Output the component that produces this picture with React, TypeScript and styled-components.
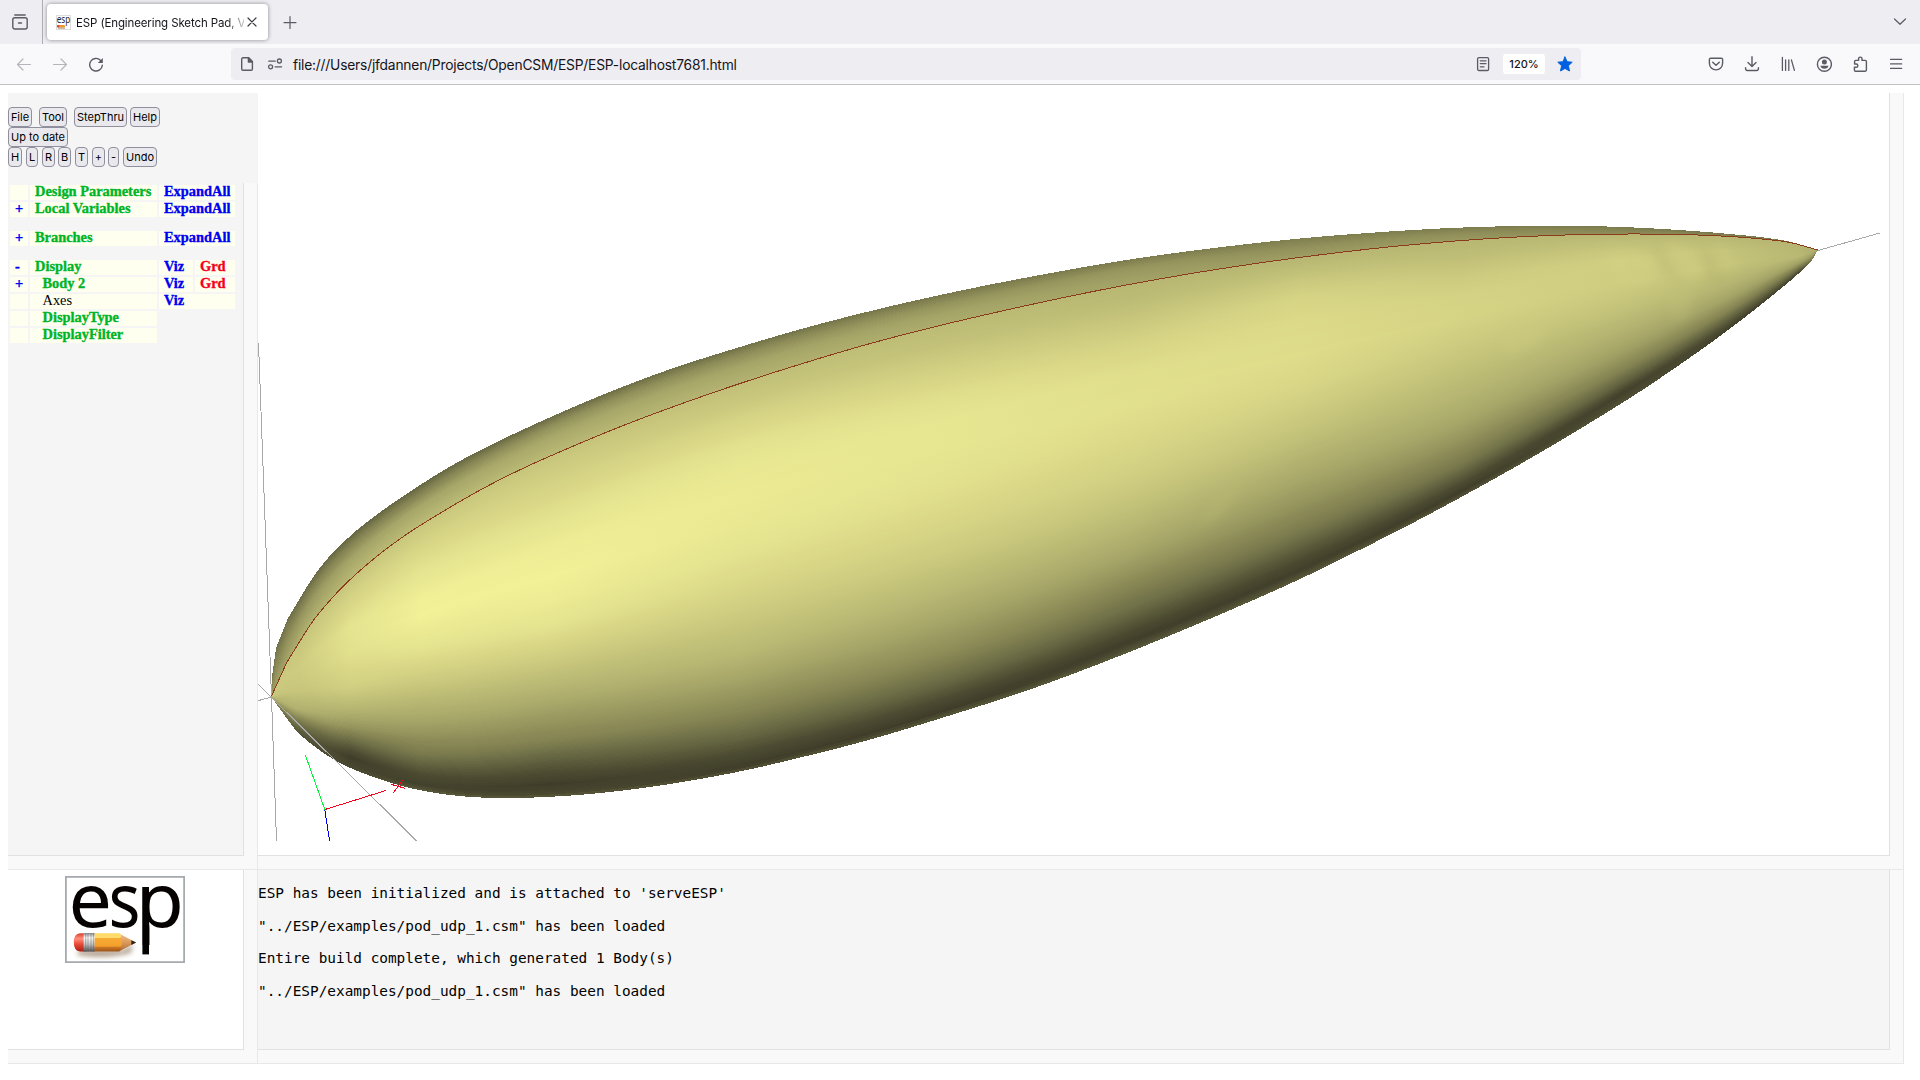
import React from "react";
import styled, { createGlobalStyle } from "styled-components";

const UI = `Inter, "Liberation Sans", sans-serif`;

const GlobalStyle = createGlobalStyle`
  * { box-sizing: border-box; }
  html, body { margin: 0; padding: 0; background: #fff; overflow: hidden; }
`;

const Window = styled.div`
  width: 1920px;
  height: 1080px;
  display: flex;
  flex-direction: column;
  overflow: hidden;
  background: #fff;
  font-family: ${UI};
`;

/* ---------- browser chrome ---------- */

const TabStrip = styled.header`
  height: 44px;
  display: flex;
  align-items: center;
  background: #eeedf2;
  color: #5b5b66;
`;

const ViewButton = styled.div`
  width: 43px;
  height: 44px;
  padding: 14px 0 0 12px;
  border-right: 1px solid #adadb3;
`;

const Tab = styled.div`
  width: 221px;
  height: 36px;
  margin-left: 4px;
  padding: 0 8px 0 9px;
  display: flex;
  align-items: center;
  background: #fff;
  border-radius: 4px;
  box-shadow: 0 0 4px rgba(0, 0, 0, 0.42);
  color: #15141a;
`;

const TabTitle = styled.span`
  width: 168px;
  margin-left: 5px;
  margin-right: auto;
  font-size: 11.5px;
  letter-spacing: -0.12px;
  line-height: 20px;
  padding-top: 1px;
  white-space: nowrap;
  overflow: hidden;
  mask-image: linear-gradient(to right, #000 150px, transparent 174px);
`;

const NewTab = styled.div`
  margin-left: 14px;
  height: 16px;
`;

const ListTabs = styled.div`
  margin-left: auto;
  margin-right: 12px;
  height: 16px;
`;

const NavBar = styled.nav`
  height: 41px;
  display: flex;
  align-items: center;
  padding: 0 16px;
  background: #f9f9fb;
  border-bottom: 1px solid #c1c1c6;
  color: #5b5b66;
`;

const IconRow = styled.div<{ $push?: boolean }>`
  display: flex;
  align-items: center;
  gap: 20px;
  margin-left: ${(p) => (p.$push ? "auto" : "0")};
  height: 16px;
`;

const UrlBar = styled.div`
  width: 1350px;
  height: 32px;
  margin-left: 127px;
  padding: 0 8px 0 8px;
  display: flex;
  align-items: center;
  background: #eeedf2;
  border-radius: 4px;
`;

const UrlText = styled.span`
  margin-left: 10px;
  flex: 1;
  font-size: 13.8px;
  line-height: 20px;
  padding-top: 2px;
  letter-spacing: -0.2px;
  color: #15141a;
  white-space: nowrap;
`;

const IconGap = styled.div<{ $w: number }>`
  width: ${(p) => p.$w}px;
`;

const ZoomPill = styled.div`
  width: 42px;
  height: 20px;
  margin: 0 12px 0 12px;
  border-radius: 3px;
  background: #fff;
  color: #15141a;
  font-size: 11px;
  font-weight: 500;
  line-height: 20px;
  text-align: center;
`;

/* ---------- page ---------- */

const Page = styled.main`
  flex: 1;
  padding: 8px 16px 0 8px;
  display: grid;
  grid-template-columns: 250px 1646px;
  grid-template-rows: 777px 194px;
`;

const LeftColumn = styled.div`
  display: flex;
  flex-direction: column;
`;

const Frame = styled.section`
  flex: 1;
  display: flex;
  padding: 0 13px 13px 0;
  background: #f9f9f9;
  border: solid #e8e8e8;
  border-width: 0 1px 1px 0;
`;

const Inner = styled.div<{ $bg: string }>`
  flex: 1;
  min-width: 0;
  background: ${(p) => p.$bg};
  border: solid #e1e1e1;
  border-width: 0 1px 1px 0;
`;

const Toolbar = styled.div`
  height: 90px;
  padding-top: 14px;
  background: #f5f5f5;
`;

const ButtonRow = styled.div`
  display: flex;
  height: 20px;
`;

const Button = styled.button<{ $w: number; $ml?: number }>`
  width: ${(p) => p.$w}px;
  height: 20px;
  margin: 0 0 0 ${(p) => p.$ml ?? 0}px;
  padding: 0;
  border: 1px solid #8f8f9d;
  border-radius: 4px;
  background: #e9e9ed;
  color: #000;
  font-family: ${UI};
  font-size: 11px;
  line-height: 18px;
  text-align: center;
  white-space: nowrap;
`;

const Tree = styled.div`
  padding: 2px 0 0 2px;
  display: flex;
  flex-direction: column;
  gap: 2px;
`;

const TreeRow = styled.div<{ $gapBefore?: boolean }>`
  display: grid;
  grid-template-columns: 18px 127px 34px 40px;
  column-gap: 2px;
  height: 15px;
  margin-top: ${(p) => (p.$gapBefore ? 12 : 0)}px;
`;

const Cell = styled.div<{ $c?: string; $span?: number; $indent?: boolean; $plain?: boolean }>`
  grid-column: span ${(p) => p.$span ?? 1};
  padding-left: ${(p) => (p.$indent ? 12.5 : 5)}px;
  background: #fffff0;
  color: ${(p) => p.$c ?? "#000"};
  font-family: "Liberation Serif", serif;
  font-size: 14.4px;
  font-weight: ${(p) => (p.$plain ? 400 : 700)};
  -webkit-text-stroke: ${(p) => (p.$plain ? 0 : 0.35)}px currentColor;
  line-height: 12px;
  white-space: nowrap;
`;

const LogoPane = styled.div`
  padding: 6px 0 0 57px;
`;

const Console = styled.div`
  padding-top: 15px;
  font-family: "DejaVu Sans Mono", "Liberation Mono", monospace;
  font-size: 14.4px;
  color: #000;
`;

const Message = styled.pre`
  margin: 0 0 15.67px;
  height: 17px;
  line-height: 17px;
  font: inherit;
`;

/* ---------- icons ---------- */

type IconProps = { children: React.ReactNode; color?: string; w?: number };
const Icon = ({ children, color = "currentColor", w = 1.3 }: IconProps) => (
  <svg width="16" height="16" viewBox="0 0 16 16" fill="none" stroke={color} strokeWidth={w}
    strokeLinecap="round" strokeLinejoin="round" style={{ display: "block", flex: "none" }}>
    {children}
  </svg>
);

const Favicon = () => (
  <svg width="15" height="15" viewBox="0 0 15 15" style={{ display: "block", flex: "none" }}>
    <rect x=".5" y=".5" width="14" height="14" fill="#fff" stroke="#dcdcdc" />
    <text x=".8" y="8.4" fontFamily="Noto Sans" fontSize="10.5" textLength="13.4" lengthAdjust="spacingAndGlyphs" fill="#222">esp</text>
    <rect x="1" y="10" width="8" height="2.6" rx="1" fill="#f0962c" />
    <rect x="1" y="10" width="2.4" height="2.6" rx="1" fill="#d9483a" />
    <rect x="2" y="12.6" width="7" height="1" fill="#a98c6e" />
  </svg>
);

/* ---------- ESP logo ---------- */

const Logo = () => (
  <svg width="120" height="87" viewBox="0 0 120 87" style={{ display: "block" }}>
    <defs>
      <linearGradient id="wood" x1="0" y1="0" x2="0" y2="1">
        <stop offset="0" stopColor="#ffd964" /><stop offset=".26" stopColor="#ffdd70" />
        <stop offset=".28" stopColor="#f7ab34" /><stop offset=".72" stopColor="#f3a02b" />
        <stop offset=".75" stopColor="#cf7a22" /><stop offset="1" stopColor="#9c541b" />
      </linearGradient>
      <linearGradient id="rubber" x1="0" y1="0" x2="0" y2="1">
        <stop offset="0" stopColor="#d8402c" /><stop offset=".3" stopColor="#ff8f7c" />
        <stop offset=".6" stopColor="#e64a36" /><stop offset="1" stopColor="#a81e14" />
      </linearGradient>
      <linearGradient id="ferrule" x1="0" y1="0" x2="0" y2="1">
        <stop offset="0" stopColor="#8f8f8f" /><stop offset=".25" stopColor="#fbfbfb" />
        <stop offset=".6" stopColor="#c4c4c4" /><stop offset="1" stopColor="#545454" />
      </linearGradient>
      <linearGradient id="tip" x1="0" y1="0" x2="0" y2="1">
        <stop offset="0" stopColor="#f2c08a" /><stop offset=".5" stopColor="#dc9a5c" /><stop offset="1" stopColor="#a86a34" />
      </linearGradient>
      <filter id="soft" x="-20%" y="-80%" width="140%" height="260%"><feGaussianBlur stdDeviation="2.6" /></filter>
    </defs>
    <rect x=".9" y=".9" width="118.2" height="85.2" fill="#fff" stroke="#a2a7ab" strokeWidth="1.7" />
    <g fontFamily="Noto Sans, Open Sans, sans-serif" fontSize="75" fill="#060202">
      <text x="3.4" y="50.6" textLength="43.5" lengthAdjust="spacingAndGlyphs">e</text>
      <text x="43.6" y="50.6" textLength="32" lengthAdjust="spacingAndGlyphs">s</text>
      <text x="71" y="50.6" textLength="48" lengthAdjust="spacingAndGlyphs">p</text>
    </g>
    <rect x="77.4" y="11" width="6.6" height="67.4" fill="#060202" />
    <path d="M14 74 H58 L68 68 L66 77 Q40 84 12 79Z" fill="#6b4a28" opacity=".5" filter="url(#soft)" />
    <path d="M54 57.4 L71 66.6 L54 75.4Z" fill="url(#tip)" />
    <path d="M66.3 64.2 L71.2 66.6 L66.3 69Z" fill="#2a2520" />
    <path d="M29 57.2 H54.5 Q57.5 60 55 62 Q59 66 55.5 71 Q57 74 54 75.4 H29Z" fill="url(#wood)" />
    <path d="M20 57.2 H15 Q8.8 58 8.8 66 Q8.8 75 15 75.6 H20Z" fill="url(#rubber)" />
    <rect x="18.6" y="57" width="11" height="18.6" fill="url(#ferrule)" />
    <path d="M20.7 57V75.6M23 57V75.6M26 57V75.6M28.4 57V75.6" stroke="#555" strokeWidth=".6" opacity=".7" />
  </svg>
);

/* ---------- 3-D view ---------- */

type Pt = [number, number];

const TOP: Pt[] = [[271.5, 696], [272, 677], [276, 648], [288, 618], [311, 580], [325, 561.5], [348, 538], [380, 512.3], [417, 487], [453, 464.8], [500, 440.5], [533, 425], [590, 400], [665, 371], [740, 347], [803, 328.5], [883, 308], [954, 292], [1040, 275], [1133, 259], [1222, 247], [1300, 238.5], [1372, 232.7], [1466, 227.4], [1500, 226.4], [1550, 225.8], [1600, 226.3], [1640, 227.8], [1700, 231.5], [1735, 234.5], [1770, 238.3], [1790, 241.7], [1817.5, 250]];
const SEAM: Pt[] = [[271.5, 696], [287, 662], [310, 625], [333, 597], [370, 562], [403, 536.8], [443, 511.5], [483, 488.5], [527, 466.5], [567, 448.8], [617, 428], [692, 400], [740, 383.5], [793.6, 366.3], [865, 345], [940, 325.5], [1018.6, 307.3], [1097, 290.7], [1186, 274.4], [1300, 257.4], [1344, 251.9], [1412, 244.7], [1491, 238.5], [1576, 234.7], [1637, 234], [1698, 235], [1758.6, 238.7], [1791, 242.7], [1817.5, 250]];
const BOTTOM: Pt[] = [[271.5, 697], [276, 703.5], [293, 727], [318, 749], [340, 763], [364, 773.5], [390, 782.5], [410, 788], [430, 792], [467, 796.7], [506, 798], [550, 796.8], [600, 793], [650, 787], [700, 779], [750, 769.3], [790, 760], [865, 741], [940, 718.5], [1037, 687], [1115, 657.7], [1170, 635.5], [1235, 608], [1300, 579], [1346, 556.7], [1426, 516], [1480, 486.7], [1530, 458.5], [1583.6, 426.7], [1640, 391.5], [1680, 364.5], [1707, 345.5], [1740, 321], [1773, 295], [1794, 277.5], [1807, 265.5], [1812, 260], [1817.5, 250.5]];

// The mesh is coarse at the nose, so its outline is straight-edged up to this x.
const NOSE_END = 311;

// Cubic Hermite interpolation with distance-weighted tangents.
const curve = (pts: Pt[]) => {
  const n = pts.length;
  const gaps = pts.slice(1).map((p, i) => p[0] - pts[i][0]);
  const d = gaps.map((h, i) => (pts[i + 1][1] - pts[i][1]) / h);
  const m = pts.map((_, i) => {
    if (i === 0) return d[0];
    if (i === n - 1) return d[n - 2];
    return (d[i - 1] * gaps[i] + d[i] * gaps[i - 1]) / (gaps[i - 1] + gaps[i]);
  });
  return (x: number) => {
    if (x <= pts[0][0]) return pts[0][1];
    if (x >= pts[n - 1][0]) return pts[n - 1][1];
    let i = 0;
    while (x > pts[i + 1][0]) i++;
    const h = gaps[i];
    const t = (x - pts[i][0]) / h;
    if (pts[i + 1][0] <= NOSE_END) return pts[i][1] + t * (pts[i + 1][1] - pts[i][1]);
    const a = t * t, b = a * t;
    return (2 * b - 3 * a + 1) * pts[i][1] + (b - 2 * a + t) * h * m[i] + (3 * a - 2 * b) * pts[i + 1][1] + (b - a) * h * m[i + 1];
  };
};

const lerpTable = (pts: Pt[], x: number) => {
  if (x <= pts[0][0]) return pts[0][1];
  for (let i = 1; i < pts.length; i++) {
    if (x <= pts[i][0]) {
      const t = (x - pts[i - 1][0]) / (pts[i][0] - pts[i - 1][0]);
      return pts[i - 1][1] + t * (pts[i][1] - pts[i - 1][1]);
    }
  }
  return pts[pts.length - 1][1];
};

const RAMP: [number, number[]][] = [
  [0, [60, 58, 39]], [0.1, [75, 74, 49]], [0.25, [106, 107, 69]], [0.4, [138, 137, 86]], [0.53, [165, 165, 104]],
  [0.65, [186, 185, 116]], [0.78, [210, 208, 130]], [0.88, [227, 226, 142]], [1, [243, 242, 152]],
];
const shadeColor = (s: number) =>
  `rgb(${[0, 1, 2].map((c) => lerpTable(RAMP.map(([k, v]) => [k, v[c]] as Pt), s).toFixed(1)).join(",")})`;

// Light intensity across the hull: `up` runs silhouette -> seam, `low` runs seam -> lower silhouette.
const STATIONS: { x: number; up: Pt[]; low: Pt[] }[] = [
  { x: 272, up: [[0, 0.3], [1, 0.5]], low: [[0, 0.75], [0.5, 0.72], [0.8, 0.6], [1, 0.35]] },
  { x: 300, up: [[0, 0.27], [0.4, 0.45], [1, 0.6]], low: [[0, 0.72], [0.28, 0.76], [0.53, 0.72], [0.73, 0.6], [0.86, 0.32], [1, 0.12]] },
  { x: 350, up: [[0, 0.25], [0.2, 0.38], [0.5, 0.52], [1, 0.65]], low: [[0, 0.72], [0.1, 0.8], [0.25, 0.89], [0.39, 0.87], [0.57, 0.77], [0.67, 0.65], [0.78, 0.45], [0.88, 0.17], [0.94, 0.02], [1, 0.1]] },
  { x: 420, up: [[0, 0.25], [0.2, 0.38], [0.5, 0.54], [1, 0.67]], low: [[0, 0.73], [0.09, 0.82], [0.18, 0.9], [0.28, 0.985], [0.34, 0.99], [0.43, 0.92], [0.53, 0.81], [0.62, 0.7], [0.71, 0.57], [0.78, 0.46], [0.86, 0.32], [0.93, 0.12], [0.975, 0.04], [1, 0.2]] },
  { x: 550, up: [[0, 0.28], [0.2, 0.43], [0.5, 0.55], [1, 0.66]], low: [[0, 0.72], [0.08, 0.79], [0.18, 0.88], [0.26, 0.96], [0.35, 0.99], [0.42, 0.96], [0.5, 0.88], [0.58, 0.77], [0.67, 0.64], [0.76, 0.48], [0.83, 0.37], [0.9, 0.17], [0.96, 0.02], [0.985, 0.08], [1, 0.2]] },
  { x: 740, up: [[0, 0.3], [0.2, 0.42], [0.5, 0.53], [1, 0.62]], low: [[0, 0.69], [0.05, 0.74], [0.09, 0.8], [0.15, 0.87], [0.22, 0.93], [0.29, 0.95], [0.36, 0.93], [0.44, 0.88], [0.53, 0.81], [0.61, 0.73], [0.69, 0.65], [0.77, 0.51], [0.845, 0.38], [0.9, 0.25], [0.955, 0.09], [0.985, 0.02], [1, 0.2]] },
  { x: 954, up: [[0, 0.33], [0.3, 0.45], [0.6, 0.52], [1, 0.57]], low: [[0, 0.66], [0.05, 0.7], [0.105, 0.77], [0.17, 0.85], [0.24, 0.9], [0.315, 0.9], [0.41, 0.87], [0.49, 0.82], [0.58, 0.75], [0.67, 0.65], [0.76, 0.52], [0.835, 0.41], [0.9, 0.26], [0.945, 0.12], [0.98, 0.02], [1, 0.2]] },
  { x: 1133, up: [[0, 0.34], [0.3, 0.45], [0.6, 0.49], [1, 0.53]], low: [[0, 0.64], [0.045, 0.67], [0.09, 0.72], [0.17, 0.81], [0.24, 0.86], [0.33, 0.87], [0.42, 0.83], [0.52, 0.77], [0.6, 0.7], [0.66, 0.63], [0.735, 0.53], [0.81, 0.4], [0.88, 0.27], [0.93, 0.13], [0.97, 0.02], [1, 0.2]] },
  { x: 1300, up: [[0, 0.35], [0.4, 0.43], [1, 0.5]], low: [[0, 0.63], [0.06, 0.72], [0.12, 0.8], [0.2, 0.84], [0.3, 0.85], [0.39, 0.82], [0.47, 0.76], [0.56, 0.69], [0.62, 0.62], [0.68, 0.55], [0.77, 0.44], [0.85, 0.32], [0.91, 0.17], [0.97, 0.03], [1, 0.2]] },
  { x: 1460, up: [[0, 0.34], [0.4, 0.42], [1, 0.48]], low: [[0, 0.64], [0.05, 0.67], [0.13, 0.74], [0.21, 0.79], [0.3, 0.8], [0.4, 0.75], [0.49, 0.7], [0.61, 0.62], [0.7, 0.54], [0.79, 0.43], [0.87, 0.31], [0.935, 0.13], [0.975, 0.02], [1, 0.18]] },
  { x: 1620, up: [[0, 0.33], [1, 0.43]], low: [[0, 0.64], [0.07, 0.71], [0.15, 0.77], [0.29, 0.76], [0.44, 0.7], [0.56, 0.62], [0.7, 0.5], [0.8, 0.37], [0.88, 0.2], [0.94, 0.04], [1, 0.15]] },
  { x: 1730, up: [[0, 0.3], [1, 0.4]], low: [[0, 0.64], [0.15, 0.7], [0.3, 0.71], [0.5, 0.63], [0.65, 0.53], [0.79, 0.38], [0.9, 0.18], [1, 0.02]] },
  { x: 1800, up: [[0, 0.3], [1, 0.42]], low: [[0, 0.62], [0.4, 0.65], [0.65, 0.5], [0.85, 0.25], [1, 0.05]] },
  { x: 1818, up: [[0, 0.3], [1, 0.42]], low: [[0, 0.62], [1, 0.4]] },
];

const topAt = curve(TOP);
const seamAt = curve(SEAM);
const bottomAt = curve(BOTTOM);

const XS: number[] = [];
for (let x = 271.5; x < 1817.5; x += x < 290 ? 0.5 : x > 1780 ? 2 : 6) XS.push(x);
XS.push(1817.5);

const level = (v: number) => (x: number) =>
  v < 1 ? topAt(x) + v * (seamAt(x) - topAt(x)) : seamAt(x) + (v - 1) * (bottomAt(x) - seamAt(x));

const fmt = (x: number, y: number) => `${x.toFixed(1)},${y.toFixed(2)}`;
const bottomPath = [...XS].reverse().map((x) => fmt(x, bottomAt(x))).join(" ");

const LEVELS: number[] = [];
for (let i = 0; i < 16; i++) LEVELS.push(i / 16);
for (let i = 0; i < 150; i++) LEVELS.push(1 + i / 150);

const SEAM_PATH = XS.map((x) => fmt(x, seamAt(x))).join(" ");

const Hull = () => (
  <g shapeRendering="crispEdges">
    <defs>
      {LEVELS.map((v, i) => (
        <linearGradient key={i} id={`hull${i}`} gradientUnits="userSpaceOnUse" x1="272" y1="0" x2="1818" y2="0">
          {STATIONS.map((s) => (
            <stop key={s.x} offset={(s.x - 272) / 1546}
              stopColor={shadeColor(v < 1 ? lerpTable(s.up, v) : lerpTable(s.low, v - 1))} />
          ))}
        </linearGradient>
      ))}
    </defs>
    {LEVELS.map((v, i) => {
      const f = level(v);
      return <polygon key={i} fill={`url(#hull${i})`} points={`${XS.map((x) => fmt(x, f(x))).join(" ")} ${bottomPath}`} />;
    })}
    <polyline points={SEAM_PATH} fill="none" stroke="#8c3a1c" strokeWidth="1" />
  </g>
);

// Slight facet shading where the surface mesh gets coarse near the tail.
const FACETS: { d: string; fill: string; o: number }[] = [
  { d: "M1606 254L1632 250L1662 262L1650 284L1622 288Z", fill: "#d8d687", o: 0.2 },
  { d: "M1664 240L1690 246L1706 272L1692 282L1676 262Z", fill: "#d8d687", o: 0.2 },
  { d: "M1712 242L1728 246L1740 268L1728 274Z", fill: "#d8d687", o: 0.16 },
  { d: "M1648 246L1664 250L1682 284L1664 276Z", fill: "#a3a263", o: 0.15 },
  { d: "M1700 246L1712 256L1724 284L1708 280Z", fill: "#a3a263", o: 0.15 },
  { d: "M1666 296L1696 290L1688 318L1672 322Z", fill: "#cccb80", o: 0.18 },
  { d: "M1500 338L1548 326L1536 348L1508 356Z", fill: "#d4d386", o: 0.18 },
  { d: "M1212 500L1246 478L1222 516L1196 530Z", fill: "#c8c77c", o: 0.16 },
];

const Viewport = () => (
  <svg width="1631" height="762" viewBox="258 93 1631 762" style={{ display: "block" }}>
    <defs>
      <filter id="facet" x="-40%" y="-40%" width="180%" height="180%"><feGaussianBlur stdDeviation="4" /></filter>
    </defs>
    <line x1="258.5" y1="343" x2="271.5" y2="697" stroke="#a8a8a8" shapeRendering="crispEdges" />
    <Hull />
    {FACETS.map((f) => <path key={f.d} d={f.d} fill={f.fill} opacity={f.o} filter="url(#facet)" />)}
    <g stroke="#a8a8a8" strokeWidth="1" shapeRendering="crispEdges">
      <line x1="271.5" y1="697" x2="276.5" y2="841" />
      <line x1="258" y1="684" x2="416.7" y2="841" />
      <line x1="258" y1="700.7" x2="271.5" y2="697" />
      <line x1="1818" y1="250.5" x2="1880" y2="233" />
    </g>
    <g strokeWidth="1" shapeRendering="crispEdges">
      <line x1="305.3" y1="755" x2="324.8" y2="809.5" stroke="#00f53c" />
      <line x1="325" y1="809.5" x2="386" y2="790.5" stroke="#f5001e" />
      <line x1="324.8" y1="810" x2="329.6" y2="841" stroke="#0000f0" />
      <line x1="391" y1="784.3" x2="405" y2="788.3" stroke="#f5001e" />
      <line x1="402.8" y1="780" x2="393.3" y2="793" stroke="#f5001e" />
    </g>
  </svg>
);

/* ---------- data ---------- */

const GREEN = "#00b428";
const BLUE = "#0000f0";
const RED = "#f5001e";

type Row = { mark?: string; name: string; indent?: boolean; plain?: boolean; viz?: string; grd?: boolean; gap?: boolean };
const ROWS: Row[] = [
  { name: "Design Parameters", viz: "ExpandAll" },
  { mark: "+", name: "Local Variables", viz: "ExpandAll" },
  { mark: "+", name: "Branches", viz: "ExpandAll", gap: true },
  { mark: "-", name: "Display", viz: "Viz", grd: true, gap: true },
  { mark: "+", name: "Body 2", indent: true, viz: "Viz", grd: true },
  { name: "Axes", indent: true, plain: true, viz: "Viz" },
  { name: "DisplayType", indent: true },
  { name: "DisplayFilter", indent: true },
];

const MESSAGES = [
  "ESP has been initialized and is attached to 'serveESP'",
  '"../ESP/examples/pod_udp_1.csm" has been loaded',
  "Entire build complete, which generated 1 Body(s)",
  '"../ESP/examples/pod_udp_1.csm" has been loaded',
];

export default function App() {
  return (
    <Window>
      <GlobalStyle />
      <TabStrip>
        <ViewButton>
          <Icon w={1.4}>
            <path d="M2.8 1H13.2" /><rect x=".8" y="3.8" width="14.4" height="11.2" rx="2" /><path d="M6.5 9H9.5" />
          </Icon>
        </ViewButton>
        <Tab>
          <Favicon />
          <TabTitle>ESP (Engineering Sketch Pad, V1</TabTitle>
          <Icon color="#3c3b44" w={1.2}><path d="M4 4L12 12M12 4L4 12" /></Icon>
        </Tab>
        <NewTab><Icon w={1.2}><path d="M8 2.7V14.5M2 8.6H14" /></Icon></NewTab>
        <ListTabs><Icon w={1.2}><path d="M2.5 5L8 10.3L13.5 5" /></Icon></ListTabs>
      </TabStrip>
      <NavBar>
        <IconRow>
          <Icon color="#b5b5bb" w={1.2}><path d="M14.5 8.5H1.7M7 3L1.5 8.5L7 14" /></Icon>
          <Icon color="#b5b5bb" w={1.2}><path d="M1.5 8.5H14.3M9 3L14.5 8.5L9 14" /></Icon>
          <Icon w={1.4}><path d="M14.3 9.2A6.3 6.3 0 1 1 12.4 4.2" /><path d="M14.8 2V7H9.8Z" fill="currentColor" stroke="none" /></Icon>
        </IconRow>
        <UrlBar>
          <Icon w={1.4}><path d="M4 1.8H9.8L13.4 5.4V12.9A1.3 1.3 0 0 1 12.1 14.2H4A1.3 1.3 0 0 1 2.7 12.9V3.1A1.3 1.3 0 0 1 4 1.8Z" /><path d="M9.4 2V6H13.4Z" fill="currentColor" /></Icon>
          <IconGap $w={12} />
          <Icon w={1.3}><path d="M1.8 5.2H8.2M8.2 10.8H14.6" /><circle cx="12.4" cy="5" r="2" /><circle cx="3.6" cy="10.8" r="2" /></Icon>
          <UrlText>file:///Users/jfdannen/Projects/OpenCSM/ESP/ESP-localhost7681.html</UrlText>
          <Icon w={1.3}><rect x="2.6" y="1.7" width="11" height="12.8" rx="1.3" /><path d="M5.3 4.8H11M5.3 7.6H11M5.3 10.8H9" /></Icon>
          <ZoomPill>120%</ZoomPill>
          <Icon color="#0060df" w={1}><path d="M8 1L10.1 5.7L15.2 6.2L11.4 9.7L12.5 15L8 12.4L3.5 15L4.6 9.7L.8 6.2L5.9 5.7Z" fill="#0060df" /></Icon>
        </UrlBar>
        <IconRow $push>
          <Icon w={1.4}><path d="M2.8 2.2H13.2A1.4 1.4 0 0 1 14.6 3.6V7.3A6.6 6.6 0 0 1 1.4 7.3V3.6A1.4 1.4 0 0 1 2.8 2.2Z" /><path d="M4.7 6.2L8 9.3L11.3 6.2" /></Icon>
          <Icon w={1.4}><path d="M8 .8V10.4M4 6.6L8 10.6L12 6.6M1.6 11.6V13A1.5 1.5 0 0 0 3.1 14.5H12.9A1.5 1.5 0 0 0 14.4 13V11.6" /></Icon>
          <Icon w={1.3}><path d="M2.4 1.4V14.4M5.6 3.9V14.4M8.8 3.9V14.4M11.4 3.9L14.4 14.4" /></Icon>
          <Icon w={1.4}><circle cx="8.4" cy="8.3" r="7" /><circle cx="8.4" cy="6" r="2.5" fill="currentColor" stroke="none" /><path d="M4.4 9.8H12.4Q12 12.8 8.4 12.8Q4.8 12.8 4.4 9.8Z" fill="currentColor" stroke="none" /></Icon>
          <Icon w={1.4}><path d="M2.6 6.5V5.4A1 1 0 0 1 3.6 4.4H6.6V2.8A1.7 1.7 0 0 1 10 2.8V4.4H13.2A1.2 1.2 0 0 1 14.4 5.6V14A1.2 1.2 0 0 1 13.2 15.2H3.6A1.2 1.2 0 0 1 2.4 14V11.3H4.2A1.6 1.6 0 0 0 4.2 8H2.6Z" /></Icon>
          <Icon w={1.4}><path d="M2.6 3.4H13.6M2.6 7.9H13.6M2.6 12.4H13.6" /></Icon>
        </IconRow>
      </NavBar>

      <Page>
        <LeftColumn>
          <Toolbar>
            <ButtonRow>
              <Button $w={24}>File</Button>
              <Button $w={28} $ml={7}>Tool</Button>
              <Button $w={53} $ml={7}>StepThru</Button>
              <Button $w={30} $ml={3}>Help</Button>
            </ButtonRow>
            <ButtonRow><Button $w={60}>Up to date</Button></ButtonRow>
            <ButtonRow>
              <Button $w={14}>H</Button>
              <Button $w={12} $ml={4}>L</Button>
              <Button $w={13} $ml={4}>R</Button>
              <Button $w={13} $ml={3}>B</Button>
              <Button $w={13} $ml={4}>T</Button>
              <Button $w={13} $ml={4}>+</Button>
              <Button $w={11} $ml={3}>-</Button>
              <Button $w={34} $ml={4}>Undo</Button>
            </ButtonRow>
          </Toolbar>
          <Frame>
            <Inner $bg="#f5f5f5">
              <Tree>
                {ROWS.map((r) => (
                  <TreeRow key={r.name} $gapBefore={r.gap}>
                    <Cell $c={BLUE}>{r.mark}</Cell>
                    <Cell $c={r.plain ? "#000" : GREEN} $indent={r.indent} $plain={r.plain}>{r.name}</Cell>
                    {r.viz && <Cell $c={BLUE} $span={r.grd ? 1 : 2}>{r.viz}</Cell>}
                    {r.grd && <Cell $c={RED}>Grd</Cell>}
                  </TreeRow>
                ))}
              </Tree>
            </Inner>
          </Frame>
        </LeftColumn>
        <Frame>
          <Inner $bg="#fff"><Viewport /></Inner>
        </Frame>
        <Frame>
          <Inner $bg="#fff"><LogoPane><Logo /></LogoPane></Inner>
        </Frame>
        <Frame>
          <Inner $bg="#f5f5f5">
            <Console>
              {MESSAGES.map((m, i) => <Message key={i}>{m}</Message>)}
            </Console>
          </Inner>
        </Frame>
      </Page>
    </Window>
  );
}
